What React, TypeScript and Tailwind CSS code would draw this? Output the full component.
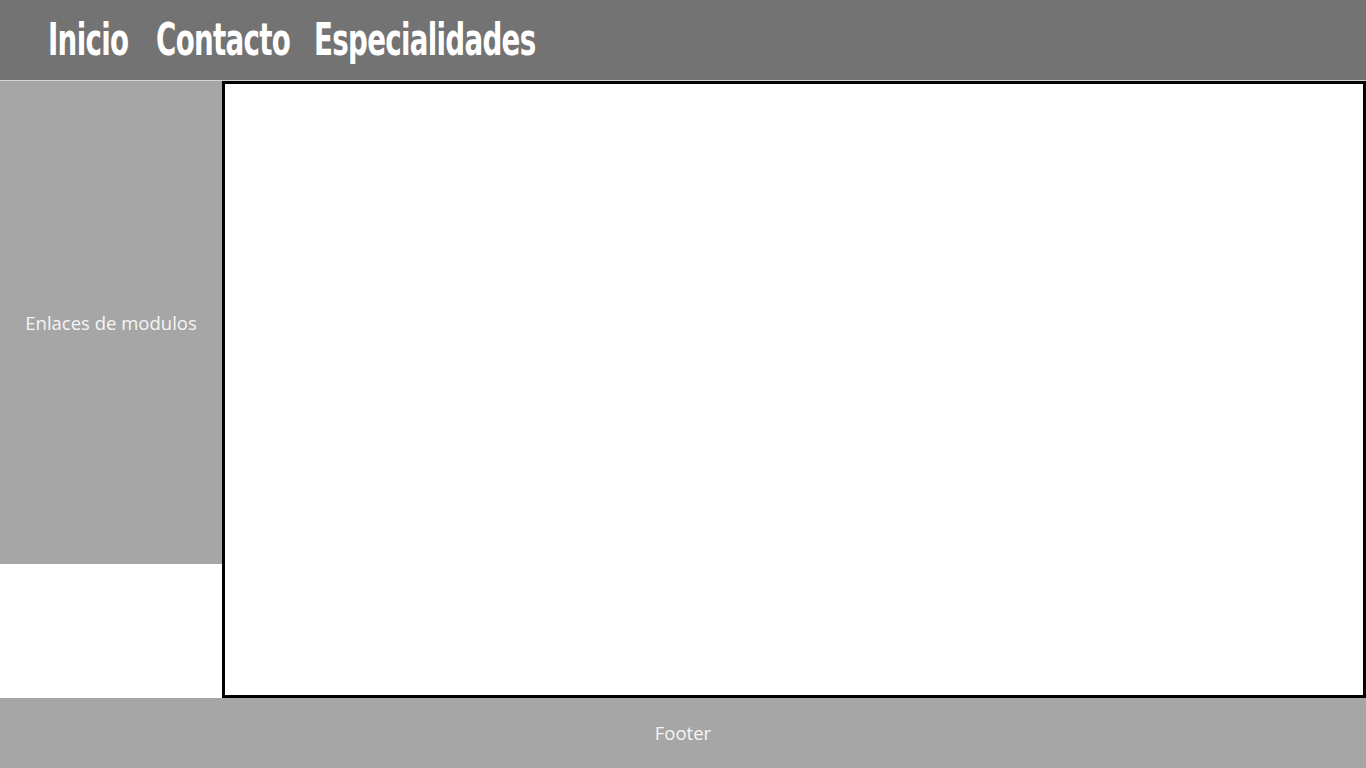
import React from 'react';

const links = [
  { label: 'Inicio', w: 'w-[81px]' },
  { label: 'Contacto', w: 'w-[131px]' },
  { label: 'Especialidades', w: 'w-[223px]' },
];

export default function App() {
  return (
    <div className="w-[1366px] h-[768px] flex flex-col bg-white font-['Open_Sans',sans-serif]">
      {/* Header */}
      <header className="h-[81px] shrink-0 bg-[#737373] border-b border-[#d4d4d4] flex items-center pl-[48px]">
        <nav className="flex items-center gap-[27px]">
          {links.map((l) => (
            <a key={l.label} className={`${l.w} block whitespace-nowrap`}>
              <span className="text-white font-bold text-[44px] leading-none font-['DejaVu_Sans_Condensed',sans-serif] tracking-[-1px] scale-x-[0.70] origin-left inline-block">
                {l.label}
              </span>
            </a>
          ))}
        </nav>
      </header>

      {/* Body */}
      <div className="flex flex-1 min-h-0">
        <aside className="w-[222px] h-[483px] shrink-0 bg-[#a6a6a6] flex items-center justify-center">
          <span className="text-[#f5f5f5] text-[18.5px]">Enlaces de modulos</span>
        </aside>
        <main className="flex-1 border-[3px] border-black bg-white"></main>
      </div>

      {/* Footer */}
      <footer className="h-[70px] shrink-0 bg-[#a6a6a6] flex items-center justify-center">
        <span className="text-[#f5f5f5] text-[18.5px]">Footer</span>
      </footer>
    </div>
  );
}
